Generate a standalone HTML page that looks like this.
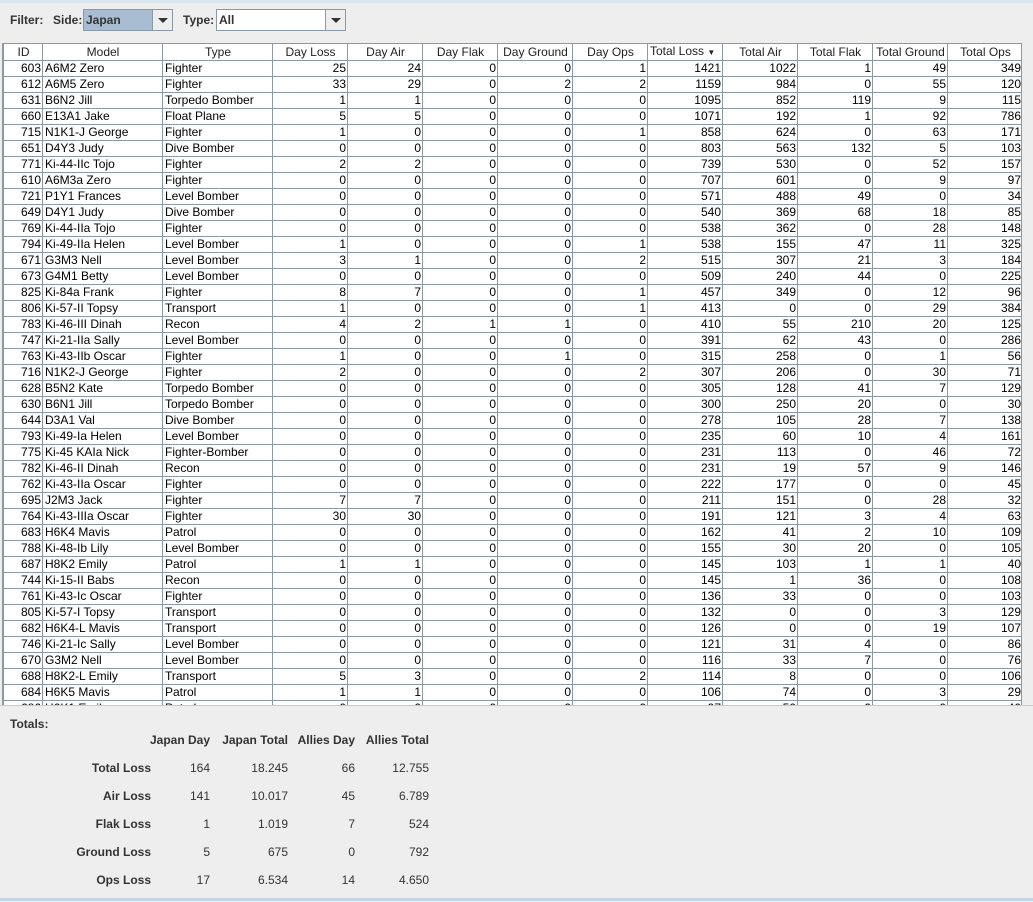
<html><head><style>
body{margin:0;width:1033px;height:901px;background:#eeeeee;font-family:"Liberation Sans",Arial,sans-serif;font-size:12px;position:relative;overflow:hidden;color:#000}
.top{position:absolute;left:0;top:0;width:1033px;height:3px;background:#dbe5ef}
.tab{position:absolute;left:60px;top:0;width:80px;height:3px;background:#b8cfe5}
.f{position:absolute;top:13px;font-weight:bold;font-size:12px;color:#333}
.cb{position:absolute;top:9px;height:22px;border:1px solid #8a99a8;background:#fff;box-sizing:border-box}
.cb .t{position:absolute;left:2px;top:3px;font-weight:bold;color:#333}
.cb .a{position:absolute;right:0;top:0;width:19px;height:20px;border-left:1px solid #8a99a8;background:#eee}
.cb .a:after{content:"";position:absolute;left:5px;top:8px;border-left:5px solid transparent;border-right:5px solid transparent;border-top:5px solid #333}
.wrap{position:absolute;left:2px;top:43px;width:1019px;height:662px;overflow:hidden;background:#fff;border-left:1px solid #8a99a8}
.sb{position:absolute;left:1021px;top:43px;width:10px;height:662px;background:#eeeeee;border-left:1px solid #8a99a8}
table{border-collapse:collapse;table-layout:fixed;width:1019px}
td,th{height:15px;line-height:15px;padding:0 1px 0 2px;border:1px solid #8a99a8;white-space:nowrap;overflow:hidden;font-size:12px}
th{font-weight:normal;background:#fff;text-align:center;color:#222}
td{text-align:right}
td.l{text-align:left}
tr:first-child th{border-top:1px solid #8a99a8}
.bot{position:absolute;left:0;top:705px;width:1033px;height:196px;border-top:1px solid #c8c8c8}
.tot{position:absolute;font-weight:bold;color:#333}
.n{position:absolute;color:#333;text-align:right}
</style></head><body>
<div class="top"></div>
<div class="f" style="left:10px">Filter:</div>
<div class="f" style="left:53px">Side:</div>
<div class="cb" style="left:83px;width:90px;background:#a8bcd2"><span class="t">Japan</span><div class="a"></div></div>
<div class="f" style="left:183px">Type:</div>
<div class="cb" style="left:216px;width:130px"><span class="t">All</span><div class="a"></div></div>
<div class="wrap"><table>
<colgroup><col style="width:39px"><col style="width:120px"><col style="width:110px"><col style="width:75px"><col style="width:75px"><col style="width:75px"><col style="width:75px"><col style="width:75px"><col style="width:75px"><col style="width:75px"><col style="width:75px"><col style="width:75px"><col style="width:75px"></colgroup>
<tr><th>ID</th><th>Model</th><th>Type</th><th>Day Loss</th><th>Day Air</th><th>Day Flak</th><th>Day Ground</th><th>Day Ops</th><th style="text-align:left">Total Loss <span style="font-size:8px">&#9660;</span></th><th>Total Air</th><th>Total Flak</th><th>Total Ground</th><th>Total Ops</th></tr>
<tr><td>603</td><td class=l>A6M2 Zero</td><td class=l>Fighter</td><td>25</td><td>24</td><td>0</td><td>0</td><td>1</td><td>1421</td><td>1022</td><td>1</td><td>49</td><td>349</td></tr>
<tr><td>612</td><td class=l>A6M5 Zero</td><td class=l>Fighter</td><td>33</td><td>29</td><td>0</td><td>2</td><td>2</td><td>1159</td><td>984</td><td>0</td><td>55</td><td>120</td></tr>
<tr><td>631</td><td class=l>B6N2 Jill</td><td class=l>Torpedo Bomber</td><td>1</td><td>1</td><td>0</td><td>0</td><td>0</td><td>1095</td><td>852</td><td>119</td><td>9</td><td>115</td></tr>
<tr><td>660</td><td class=l>E13A1 Jake</td><td class=l>Float Plane</td><td>5</td><td>5</td><td>0</td><td>0</td><td>0</td><td>1071</td><td>192</td><td>1</td><td>92</td><td>786</td></tr>
<tr><td>715</td><td class=l>N1K1-J George</td><td class=l>Fighter</td><td>1</td><td>0</td><td>0</td><td>0</td><td>1</td><td>858</td><td>624</td><td>0</td><td>63</td><td>171</td></tr>
<tr><td>651</td><td class=l>D4Y3 Judy</td><td class=l>Dive Bomber</td><td>0</td><td>0</td><td>0</td><td>0</td><td>0</td><td>803</td><td>563</td><td>132</td><td>5</td><td>103</td></tr>
<tr><td>771</td><td class=l>Ki-44-IIc Tojo</td><td class=l>Fighter</td><td>2</td><td>2</td><td>0</td><td>0</td><td>0</td><td>739</td><td>530</td><td>0</td><td>52</td><td>157</td></tr>
<tr><td>610</td><td class=l>A6M3a Zero</td><td class=l>Fighter</td><td>0</td><td>0</td><td>0</td><td>0</td><td>0</td><td>707</td><td>601</td><td>0</td><td>9</td><td>97</td></tr>
<tr><td>721</td><td class=l>P1Y1 Frances</td><td class=l>Level Bomber</td><td>0</td><td>0</td><td>0</td><td>0</td><td>0</td><td>571</td><td>488</td><td>49</td><td>0</td><td>34</td></tr>
<tr><td>649</td><td class=l>D4Y1 Judy</td><td class=l>Dive Bomber</td><td>0</td><td>0</td><td>0</td><td>0</td><td>0</td><td>540</td><td>369</td><td>68</td><td>18</td><td>85</td></tr>
<tr><td>769</td><td class=l>Ki-44-IIa Tojo</td><td class=l>Fighter</td><td>0</td><td>0</td><td>0</td><td>0</td><td>0</td><td>538</td><td>362</td><td>0</td><td>28</td><td>148</td></tr>
<tr><td>794</td><td class=l>Ki-49-IIa Helen</td><td class=l>Level Bomber</td><td>1</td><td>0</td><td>0</td><td>0</td><td>1</td><td>538</td><td>155</td><td>47</td><td>11</td><td>325</td></tr>
<tr><td>671</td><td class=l>G3M3 Nell</td><td class=l>Level Bomber</td><td>3</td><td>1</td><td>0</td><td>0</td><td>2</td><td>515</td><td>307</td><td>21</td><td>3</td><td>184</td></tr>
<tr><td>673</td><td class=l>G4M1 Betty</td><td class=l>Level Bomber</td><td>0</td><td>0</td><td>0</td><td>0</td><td>0</td><td>509</td><td>240</td><td>44</td><td>0</td><td>225</td></tr>
<tr><td>825</td><td class=l>Ki-84a Frank</td><td class=l>Fighter</td><td>8</td><td>7</td><td>0</td><td>0</td><td>1</td><td>457</td><td>349</td><td>0</td><td>12</td><td>96</td></tr>
<tr><td>806</td><td class=l>Ki-57-II Topsy</td><td class=l>Transport</td><td>1</td><td>0</td><td>0</td><td>0</td><td>1</td><td>413</td><td>0</td><td>0</td><td>29</td><td>384</td></tr>
<tr><td>783</td><td class=l>Ki-46-III Dinah</td><td class=l>Recon</td><td>4</td><td>2</td><td>1</td><td>1</td><td>0</td><td>410</td><td>55</td><td>210</td><td>20</td><td>125</td></tr>
<tr><td>747</td><td class=l>Ki-21-IIa Sally</td><td class=l>Level Bomber</td><td>0</td><td>0</td><td>0</td><td>0</td><td>0</td><td>391</td><td>62</td><td>43</td><td>0</td><td>286</td></tr>
<tr><td>763</td><td class=l>Ki-43-IIb Oscar</td><td class=l>Fighter</td><td>1</td><td>0</td><td>0</td><td>1</td><td>0</td><td>315</td><td>258</td><td>0</td><td>1</td><td>56</td></tr>
<tr><td>716</td><td class=l>N1K2-J George</td><td class=l>Fighter</td><td>2</td><td>0</td><td>0</td><td>0</td><td>2</td><td>307</td><td>206</td><td>0</td><td>30</td><td>71</td></tr>
<tr><td>628</td><td class=l>B5N2 Kate</td><td class=l>Torpedo Bomber</td><td>0</td><td>0</td><td>0</td><td>0</td><td>0</td><td>305</td><td>128</td><td>41</td><td>7</td><td>129</td></tr>
<tr><td>630</td><td class=l>B6N1 Jill</td><td class=l>Torpedo Bomber</td><td>0</td><td>0</td><td>0</td><td>0</td><td>0</td><td>300</td><td>250</td><td>20</td><td>0</td><td>30</td></tr>
<tr><td>644</td><td class=l>D3A1 Val</td><td class=l>Dive Bomber</td><td>0</td><td>0</td><td>0</td><td>0</td><td>0</td><td>278</td><td>105</td><td>28</td><td>7</td><td>138</td></tr>
<tr><td>793</td><td class=l>Ki-49-Ia Helen</td><td class=l>Level Bomber</td><td>0</td><td>0</td><td>0</td><td>0</td><td>0</td><td>235</td><td>60</td><td>10</td><td>4</td><td>161</td></tr>
<tr><td>775</td><td class=l>Ki-45 KAIa Nick</td><td class=l>Fighter-Bomber</td><td>0</td><td>0</td><td>0</td><td>0</td><td>0</td><td>231</td><td>113</td><td>0</td><td>46</td><td>72</td></tr>
<tr><td>782</td><td class=l>Ki-46-II Dinah</td><td class=l>Recon</td><td>0</td><td>0</td><td>0</td><td>0</td><td>0</td><td>231</td><td>19</td><td>57</td><td>9</td><td>146</td></tr>
<tr><td>762</td><td class=l>Ki-43-IIa Oscar</td><td class=l>Fighter</td><td>0</td><td>0</td><td>0</td><td>0</td><td>0</td><td>222</td><td>177</td><td>0</td><td>0</td><td>45</td></tr>
<tr><td>695</td><td class=l>J2M3 Jack</td><td class=l>Fighter</td><td>7</td><td>7</td><td>0</td><td>0</td><td>0</td><td>211</td><td>151</td><td>0</td><td>28</td><td>32</td></tr>
<tr><td>764</td><td class=l>Ki-43-IIIa Oscar</td><td class=l>Fighter</td><td>30</td><td>30</td><td>0</td><td>0</td><td>0</td><td>191</td><td>121</td><td>3</td><td>4</td><td>63</td></tr>
<tr><td>683</td><td class=l>H6K4 Mavis</td><td class=l>Patrol</td><td>0</td><td>0</td><td>0</td><td>0</td><td>0</td><td>162</td><td>41</td><td>2</td><td>10</td><td>109</td></tr>
<tr><td>788</td><td class=l>Ki-48-Ib Lily</td><td class=l>Level Bomber</td><td>0</td><td>0</td><td>0</td><td>0</td><td>0</td><td>155</td><td>30</td><td>20</td><td>0</td><td>105</td></tr>
<tr><td>687</td><td class=l>H8K2 Emily</td><td class=l>Patrol</td><td>1</td><td>1</td><td>0</td><td>0</td><td>0</td><td>145</td><td>103</td><td>1</td><td>1</td><td>40</td></tr>
<tr><td>744</td><td class=l>Ki-15-II Babs</td><td class=l>Recon</td><td>0</td><td>0</td><td>0</td><td>0</td><td>0</td><td>145</td><td>1</td><td>36</td><td>0</td><td>108</td></tr>
<tr><td>761</td><td class=l>Ki-43-Ic Oscar</td><td class=l>Fighter</td><td>0</td><td>0</td><td>0</td><td>0</td><td>0</td><td>136</td><td>33</td><td>0</td><td>0</td><td>103</td></tr>
<tr><td>805</td><td class=l>Ki-57-I Topsy</td><td class=l>Transport</td><td>0</td><td>0</td><td>0</td><td>0</td><td>0</td><td>132</td><td>0</td><td>0</td><td>3</td><td>129</td></tr>
<tr><td>682</td><td class=l>H6K4-L Mavis</td><td class=l>Transport</td><td>0</td><td>0</td><td>0</td><td>0</td><td>0</td><td>126</td><td>0</td><td>0</td><td>19</td><td>107</td></tr>
<tr><td>746</td><td class=l>Ki-21-Ic Sally</td><td class=l>Level Bomber</td><td>0</td><td>0</td><td>0</td><td>0</td><td>0</td><td>121</td><td>31</td><td>4</td><td>0</td><td>86</td></tr>
<tr><td>670</td><td class=l>G3M2 Nell</td><td class=l>Level Bomber</td><td>0</td><td>0</td><td>0</td><td>0</td><td>0</td><td>116</td><td>33</td><td>7</td><td>0</td><td>76</td></tr>
<tr><td>688</td><td class=l>H8K2-L Emily</td><td class=l>Transport</td><td>5</td><td>3</td><td>0</td><td>0</td><td>2</td><td>114</td><td>8</td><td>0</td><td>0</td><td>106</td></tr>
<tr><td>684</td><td class=l>H6K5 Mavis</td><td class=l>Patrol</td><td>1</td><td>1</td><td>0</td><td>0</td><td>0</td><td>106</td><td>74</td><td>0</td><td>3</td><td>29</td></tr>
<tr><td>686</td><td class=l>H6K1 Emily</td><td class=l>Patrol</td><td>0</td><td>0</td><td>0</td><td>0</td><td>0</td><td>97</td><td>50</td><td>0</td><td>0</td><td>40</td></tr>
</table></div>
<div class="sb"></div>
<div class="bot">
<div class="tot" style="left:10px;top:11px">Totals:</div>
<div class="tot" style="left:120px;top:27px;width:90px;text-align:right">Japan Day</div>
<div class="tot" style="left:200px;top:27px;width:88px;text-align:right">Japan Total</div>
<div class="tot" style="left:280px;top:27px;width:75px;text-align:right">Allies Day</div>
<div class="tot" style="left:340px;top:27px;width:89px;text-align:right">Allies Total</div>
<div class="tot" style="left:40px;top:55px;width:111px;text-align:right">Total Loss</div>
<div class="tot" style="left:40px;top:83px;width:111px;text-align:right">Air Loss</div>
<div class="tot" style="left:40px;top:111px;width:111px;text-align:right">Flak Loss</div>
<div class="tot" style="left:40px;top:139px;width:111px;text-align:right">Ground Loss</div>
<div class="tot" style="left:40px;top:167px;width:111px;text-align:right">Ops Loss</div>
<div class="n" style="left:150px;top:55px;width:60px">164</div><div class="n" style="left:220px;top:55px;width:68px">18.245</div><div class="n" style="left:300px;top:55px;width:55px">66</div><div class="n" style="left:360px;top:55px;width:69px">12.755</div>
<div class="n" style="left:150px;top:83px;width:60px">141</div><div class="n" style="left:220px;top:83px;width:68px">10.017</div><div class="n" style="left:300px;top:83px;width:55px">45</div><div class="n" style="left:360px;top:83px;width:69px">6.789</div>
<div class="n" style="left:150px;top:111px;width:60px">1</div><div class="n" style="left:220px;top:111px;width:68px">1.019</div><div class="n" style="left:300px;top:111px;width:55px">7</div><div class="n" style="left:360px;top:111px;width:69px">524</div>
<div class="n" style="left:150px;top:139px;width:60px">5</div><div class="n" style="left:220px;top:139px;width:68px">675</div><div class="n" style="left:300px;top:139px;width:55px">0</div><div class="n" style="left:360px;top:139px;width:69px">792</div>
<div class="n" style="left:150px;top:167px;width:60px">17</div><div class="n" style="left:220px;top:167px;width:68px">6.534</div><div class="n" style="left:300px;top:167px;width:55px">14</div><div class="n" style="left:360px;top:167px;width:69px">4.650</div>
</div>
<div style="position:absolute;left:0;top:898px;width:1033px;height:3px;background:#c5d5e5"></div>
</body></html>
